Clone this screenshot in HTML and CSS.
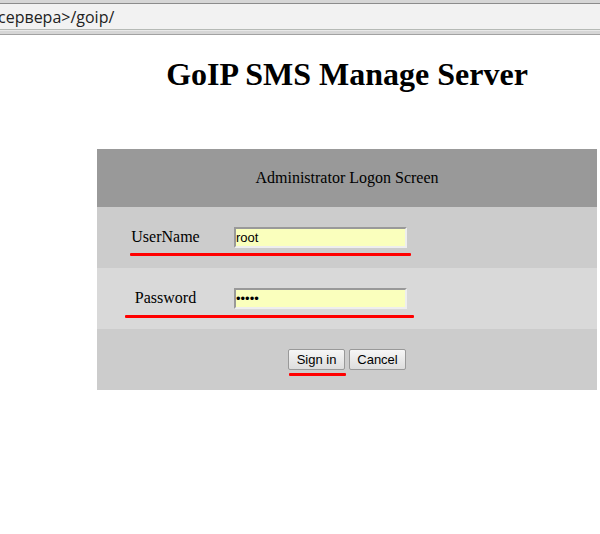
FILE: index.html
```html
<!DOCTYPE html>
<html lang="en">
<head>
<meta charset="utf-8">
<title>GoIP SMS Manage Server</title>
<link rel="stylesheet" href="styles.css">
</head>
<body>
<header class="toolbar">
  <input class="address" type="text" aria-label="Address" value="сервера&gt;/goip/">
</header>
<main class="page">
  <h1 class="title">GoIP SMS Manage Server</h1>
  <form class="panel">
    <h2 class="heading">Administrator Logon Screen</h2>
    <div class="row">
      <label class="label" for="username">UserName</label>
      <input class="field" id="username" type="text" value="root">
      <span class="mark mark-user"></span>
    </div>
    <div class="row row-light">
      <label class="label" for="password">Password</label>
      <input class="field" id="password" type="password" value="admin">
      <span class="mark mark-password"></span>
    </div>
    <div class="row actions">
      <button class="button" type="submit">Sign in<span class="mark mark-submit"></span></button>
      <button class="button" type="reset">Cancel</button>
    </div>
  </form>
</main>
</body>
</html>
```
FILE: styles.css
```css
* {
  box-sizing: border-box;
}

body {
  margin: 0;
  background: #fff;
  color: #000;
  font: 16px/18px "Liberation Serif", serif;
}

.toolbar {
  padding: 3px 0 4px;
  background: #d6d6d6;
  border-bottom: 1px solid #a2a2a2;
  overflow: hidden;
}

.address {
  display: block;
  width: 100%;
  height: 27px;
  padding: 0;
  border: 0;
  border-top: 1px solid #8c8c8c;
  border-bottom: 1px solid #b6bab6;
  box-shadow: 0 1px #e9e9e9;
  background: #f2f2f2;
  color: #222;
  font: 16px/24px "Open Sans", "Noto Sans", sans-serif;
  text-indent: -2px;
}

.page {
  padding: 20px 3px 0 97px;
}

.title {
  margin: 0 0 56px;
  font-size: 32px;
  line-height: 38px;
  text-align: center;
}

.heading {
  margin: 0;
  padding: 20px;
  background: #999;
  font-size: 16px;
  font-weight: normal;
  text-align: center;
}

.row {
  position: relative;
  display: flex;
  align-items: baseline;
  padding: 20px 0;
  background: #ccc;
}

.row-light {
  background: #d9d9d9;
}

.label {
  width: 137px;
  text-align: center;
}

.field {
  width: 173px;
  height: 21px;
  padding: 1px 0;
  border: 2px solid;
  border-color: #999 #eee #eee #999;
  background: #faffbd;
  color: #000;
  font: 13px/15px "Liberation Sans", sans-serif;
}

.actions {
  justify-content: center;
  gap: 4px;
}

.button {
  position: relative;
  width: 57px;
  height: 21px;
  padding: 0;
  border: 1px solid #999;
  border-radius: 2px;
  background: linear-gradient(#f6f6f6, #ddd);
  color: #000;
  font: 13px/15px "Liberation Sans", sans-serif;
}

.mark {
  position: absolute;
  height: 3px;
  border-radius: 1px;
  background: #f00;
}

.mark-user {
  top: 46px;
  left: 33px;
  width: 281px;
}

.mark-password {
  top: 47px;
  left: 28px;
  width: 289px;
}

.mark-submit {
  top: 23px;
  left: 0;
  width: 57px;
}
```
